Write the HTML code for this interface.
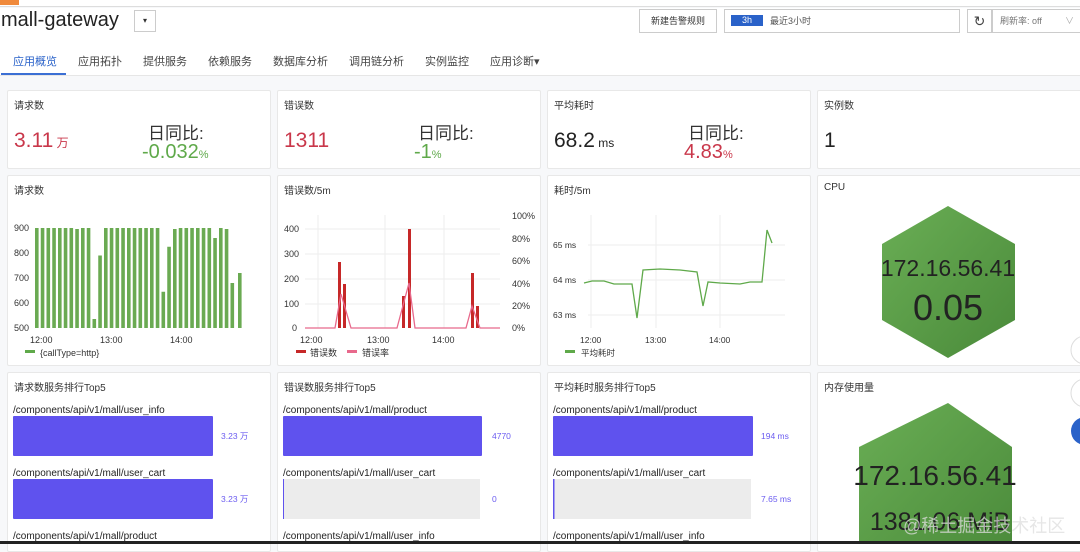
<!DOCTYPE html>
<html><head><meta charset="utf-8"><style>
*{margin:0;padding:0;box-sizing:border-box}
body{width:1080px;height:544px;overflow:hidden;background:#f7f8fa;font-family:"Liberation Sans","Noto Sans CJK SC",sans-serif;position:relative;color:#333}
.a{position:absolute}
.p{position:absolute;background:#fff;border:1px solid #e8e8e8;border-radius:2px}
.t{position:absolute;left:6px;top:6px;font-size:10px;color:#333}
.tab{position:absolute;top:53px;font-size:11px;color:#444}
</style></head><body>
<div class="a" style="left:0;top:0;width:1080px;height:7px;background:#fff;border-bottom:1px solid #ddd"></div>
<div class="a" style="left:0;top:0;width:19px;height:5px;background:#f08a3c"></div>
<div class="a" style="left:0;top:8px;width:1080px;height:68px;background:#fff;border-bottom:1px solid #e6e6e6"></div>
<div class="a" style="left:1px;top:9px;font-size:20px;color:#222">mall-gateway</div>
<div class="a" style="left:134px;top:10px;width:22px;height:22px;border:1px solid #ccc;background:#fff;font-size:8px;text-align:center;line-height:20px">▾</div>
<div class="a" style="left:639px;top:9px;width:78px;height:24px;border:1px solid #ccc;background:#fff;font-size:9px;text-align:center;line-height:22px">新建告警规则</div>
<div class="a" style="left:724px;top:9px;width:236px;height:24px;border:1px solid #ccc;background:#fff"></div>
<div class="a" style="left:731px;top:15px;width:32px;height:11px;background:#2a62c9;color:#fff;font-size:9px;text-align:center;line-height:11px">3h</div>
<div class="a" style="left:770px;top:14px;font-size:9px;color:#555">最近3小时</div>
<div class="a" style="left:967px;top:9px;width:25px;height:24px;border:1px solid #ccc;background:#fff;font-size:14px;text-align:center;line-height:22px;color:#444">↻</div>
<div class="a" style="left:992px;top:9px;width:90px;height:24px;border:1px solid #ccc;background:#fff;font-size:9px;color:#777;line-height:22px;padding-left:7px">刷新率: off<span style="position:absolute;left:72px;color:#aaa">∨</span></div>
<div class="tab" style="left:13px;color:#2a62c9">应用概览</div>
<div class="tab" style="left:78px">应用拓扑</div>
<div class="tab" style="left:143px">提供服务</div>
<div class="tab" style="left:208px">依赖服务</div>
<div class="tab" style="left:273px">数据库分析</div>
<div class="tab" style="left:349px">调用链分析</div>
<div class="tab" style="left:425px">实例监控</div>
<div class="tab" style="left:490px">应用诊断▾</div>
<div class="a" style="left:1px;top:73px;width:65px;height:2px;background:#3b6fd4"></div>

<div class="p" style="left:7px;top:90px;width:264px;height:79px"><div class="t">请求数</div>
<div class="a" style="left:6px;top:38px;font-size:21px;color:#c9374a">3.11<span style="font-size:12px"> 万</span></div>
<div class="a" style="left:140px;top:28px;font-size:17px;color:#333">日同比:</div>
<div class="a" style="left:134px;top:50px;font-size:20px;color:#5fa94a">-0.032<span style="font-size:11px">%</span></div></div>
<div class="p" style="left:277px;top:90px;width:264px;height:79px"><div class="t">错误数</div>
<div class="a" style="left:6px;top:38px;font-size:21px;color:#c9374a">1311</div>
<div class="a" style="left:140px;top:28px;font-size:17px;color:#333">日同比:</div>
<div class="a" style="left:136px;top:50px;font-size:20px;color:#5fa94a">-1<span style="font-size:11px">%</span></div></div>
<div class="p" style="left:547px;top:90px;width:264px;height:79px"><div class="t">平均耗时</div>
<div class="a" style="left:6px;top:38px;font-size:21px;color:#222">68.2<span style="font-size:12px"> ms</span></div>
<div class="a" style="left:140px;top:28px;font-size:17px;color:#333">日同比:</div>
<div class="a" style="left:136px;top:50px;font-size:20px;color:#c9374a">4.83<span style="font-size:11px">%</span></div></div>
<div class="p" style="left:817px;top:90px;width:270px;height:79px"><div class="t">实例数</div>
<div class="a" style="left:6px;top:38px;font-size:21px;color:#222">1</div></div>

<div class="p" style="left:7px;top:175px;width:264px;height:191px"><div class="t">请求数</div></div>
<div class="p" style="left:277px;top:175px;width:264px;height:191px"><div class="t">错误数/5m</div></div>
<div class="p" style="left:547px;top:175px;width:264px;height:191px"><div class="t">耗时/5m</div></div>
<div class="p" style="left:817px;top:175px;width:270px;height:191px"><div class="t">CPU</div></div>
<div class="p" style="left:7px;top:372px;width:264px;height:180px"><div class="t">请求数服务排行Top5</div></div>
<div class="p" style="left:277px;top:372px;width:264px;height:180px"><div class="t">错误数服务排行Top5</div></div>
<div class="p" style="left:547px;top:372px;width:264px;height:180px"><div class="t">平均耗时服务排行Top5</div></div>
<div class="p" style="left:817px;top:372px;width:270px;height:180px"><div class="t">内存使用量</div></div>

<svg class="a" style="left:0;top:0" width="1080" height="544" font-family="Liberation Sans, Noto Sans CJK SC, sans-serif">
<defs><linearGradient id="g" x1="0" y1="0" x2="1" y2="1"><stop offset="0" stop-color="#6aae55"/><stop offset="1" stop-color="#4a8a3a"/></linearGradient></defs>
<g font-size="9" fill="#333">
<text x="14" y="231">900</text><text x="14" y="256">800</text><text x="14" y="281">700</text><text x="14" y="306">600</text><text x="14" y="331">500</text>
<text x="30" y="343">12:00</text><text x="100" y="343">13:00</text><text x="170" y="343">14:00</text>
<text x="40" y="356">{callType=http}</text>
</g>
<rect x="25" y="350" width="10" height="3" fill="#5fa94a"/>
<g fill="#6aaa52">
<rect x="35" y="228" width="3.6" height="100"/><rect x="40.75" y="228" width="3.6" height="100"/><rect x="46.5" y="228" width="3.6" height="100"/><rect x="52.25" y="228" width="3.6" height="100"/><rect x="58" y="228" width="3.6" height="100"/><rect x="63.75" y="228" width="3.6" height="100"/><rect x="69.5" y="228" width="3.6" height="100"/><rect x="75.25" y="229" width="3.6" height="99"/><rect x="81" y="228" width="3.6" height="100"/><rect x="86.75" y="228" width="3.6" height="100"/><rect x="92.5" y="319" width="3.6" height="9"/><rect x="98.25" y="255.5" width="3.6" height="72.5"/><rect x="104" y="228" width="3.6" height="100"/><rect x="109.75" y="228" width="3.6" height="100"/><rect x="115.5" y="228" width="3.6" height="100"/><rect x="121.25" y="228" width="3.6" height="100"/><rect x="127" y="228" width="3.6" height="100"/><rect x="132.75" y="228" width="3.6" height="100"/><rect x="138.5" y="228" width="3.6" height="100"/><rect x="144.25" y="228" width="3.6" height="100"/><rect x="150" y="228" width="3.6" height="100"/><rect x="155.75" y="228" width="3.6" height="100"/><rect x="161.5" y="291.75" width="3.6" height="36.25"/><rect x="167.25" y="246.75" width="3.6" height="81.25"/><rect x="173" y="229" width="3.6" height="99"/><rect x="178.75" y="228" width="3.6" height="100"/><rect x="184.5" y="228" width="3.6" height="100"/><rect x="190.25" y="228" width="3.6" height="100"/><rect x="196" y="228" width="3.6" height="100"/><rect x="201.75" y="228" width="3.6" height="100"/><rect x="207.5" y="228" width="3.6" height="100"/><rect x="213.25" y="238" width="3.6" height="90"/><rect x="219" y="228" width="3.6" height="100"/><rect x="224.75" y="229" width="3.6" height="99"/><rect x="230.5" y="283" width="3.6" height="45"/><rect x="238" y="273" width="3.6" height="55"/>
</g>
<g stroke="#eee" stroke-width="1"><line x1="305" y1="229" x2="500" y2="229"/><line x1="305" y1="254" x2="500" y2="254"/><line x1="305" y1="279" x2="500" y2="279"/><line x1="305" y1="304" x2="500" y2="304"/><line x1="318" y1="215" x2="318" y2="328"/><line x1="385" y1="215" x2="385" y2="328"/><line x1="444" y1="215" x2="444" y2="328"/></g>
<g font-size="9" fill="#333">
<text x="284" y="232">400</text><text x="284" y="257">300</text><text x="284" y="282">200</text><text x="284" y="307">100</text><text x="292" y="331">0</text>
<text x="512" y="219">100%</text><text x="512" y="242">80%</text><text x="512" y="264">60%</text><text x="512" y="287">40%</text><text x="512" y="309">20%</text><text x="512" y="331">0%</text>
<text x="300" y="343">12:00</text><text x="367" y="343">13:00</text><text x="432" y="343">14:00</text>
<text x="310" y="356">错误数</text><text x="362" y="356">错误率</text>
</g>
<rect x="296" y="350" width="10" height="3" fill="#c62828"/><rect x="347" y="350" width="10" height="3" fill="#e8698c"/>
<g fill="#c62828"><rect x="338" y="262" width="3" height="66"/><rect x="343" y="284" width="3" height="44"/><rect x="402" y="296" width="3" height="32"/><rect x="408" y="229" width="3" height="99"/><rect x="471" y="273" width="3" height="55"/><rect x="476" y="306" width="3" height="22"/></g>
<polyline fill="none" stroke="#e8698c" stroke-width="1.3" points="305,328 335,328 341,294 351,328 397,328 409,283 415,328 466,328 472,306 480,328 500,328"/>
<g stroke="#eee"><line x1="588" y1="245" x2="785" y2="245"/><line x1="588" y1="280" x2="785" y2="280"/><line x1="588" y1="315" x2="785" y2="315"/><line x1="591" y1="215" x2="591" y2="328"/><line x1="656" y1="215" x2="656" y2="328"/><line x1="720" y1="215" x2="720" y2="328"/></g>
<g font-size="8.5" fill="#333"><text x="553" y="248">65 ms</text><text x="553" y="283">64 ms</text><text x="553" y="318">63 ms</text>
<text x="580" y="343">12:00</text><text x="645" y="343">13:00</text><text x="709" y="343">14:00</text><text x="581" y="356">平均耗时</text></g>
<rect x="565" y="350" width="10" height="3" fill="#5fa94a"/>
<polyline fill="none" stroke="#5fa94a" stroke-width="1.3" points="584,283 592,281 604,281 614,284 632,284 637,318 643,270 660,269 680,270 697,272 703,306 708,282 720,283 740,284 750,282 762,282 767,230 772,243"/>
<polygon points="948,206 1015,244 1015,320 948,358 882,320 882,244" fill="url(#g)"/>
<text x="948" y="276" font-size="23" text-anchor="middle" fill="#222">172.16.56.41</text>
<text x="948" y="320" font-size="36" text-anchor="middle" fill="#222">0.05</text>
<polygon points="948,403 1012,447 1012,560 859,560 859,447" fill="url(#g)"/>
<text x="935" y="485" font-size="28" text-anchor="middle" fill="#222">172.16.56.41</text>
<text x="940" y="530" font-size="25" text-anchor="middle" fill="#222">1381.06 MiB</text>
<text x="903" y="532" font-size="18" fill="#ddd" fill-opacity=".75">@稀土掘金技术社区</text>
<g font-size="10" fill="#222">
<text x="13" y="413">/components/api/v1/mall/user_info</text><text x="13" y="476">/components/api/v1/mall/user_cart</text><text x="13" y="539">/components/api/v1/mall/product</text>
<text x="283" y="413">/components/api/v1/mall/product</text><text x="283" y="476">/components/api/v1/mall/user_cart</text><text x="283" y="539">/components/api/v1/mall/user_info</text>
<text x="553" y="413">/components/api/v1/mall/product</text><text x="553" y="476">/components/api/v1/mall/user_cart</text><text x="553" y="539">/components/api/v1/mall/user_info</text>
</g>
<rect x="13" y="416" width="200" height="40" rx="1" fill="#5f52ee"/><rect x="13" y="479" width="200" height="40" rx="1" fill="#5f52ee"/>
<rect x="283" y="416" width="199" height="40" rx="1" fill="#5f52ee"/><rect x="283" y="479" width="197" height="40" fill="#ececec"/><rect x="283" y="479" width="1" height="40" fill="#5f52ee"/>
<rect x="553" y="416" width="200" height="40" rx="1" fill="#5f52ee"/><rect x="553" y="479" width="198" height="40" fill="#ececec"/><rect x="553" y="479" width="1.5" height="40" fill="#5f52ee"/>
<g font-size="8.5" fill="#6b5cf0"><text x="221" y="439">3.23 万</text><text x="221" y="502">3.23 万</text><text x="492" y="439">4770</text><text x="492" y="502">0</text><text x="761" y="439">194 ms</text><text x="761" y="502">7.65 ms</text></g>
<circle cx="1085" cy="350" r="14" fill="#fff" stroke="#ddd"/><circle cx="1085" cy="393" r="14" fill="#fff" stroke="#ddd"/><circle cx="1085" cy="431" r="14" fill="#2a62c9"/>
<rect x="0" y="541" width="1080" height="3" fill="#222"/>
</svg>
</body></html>
